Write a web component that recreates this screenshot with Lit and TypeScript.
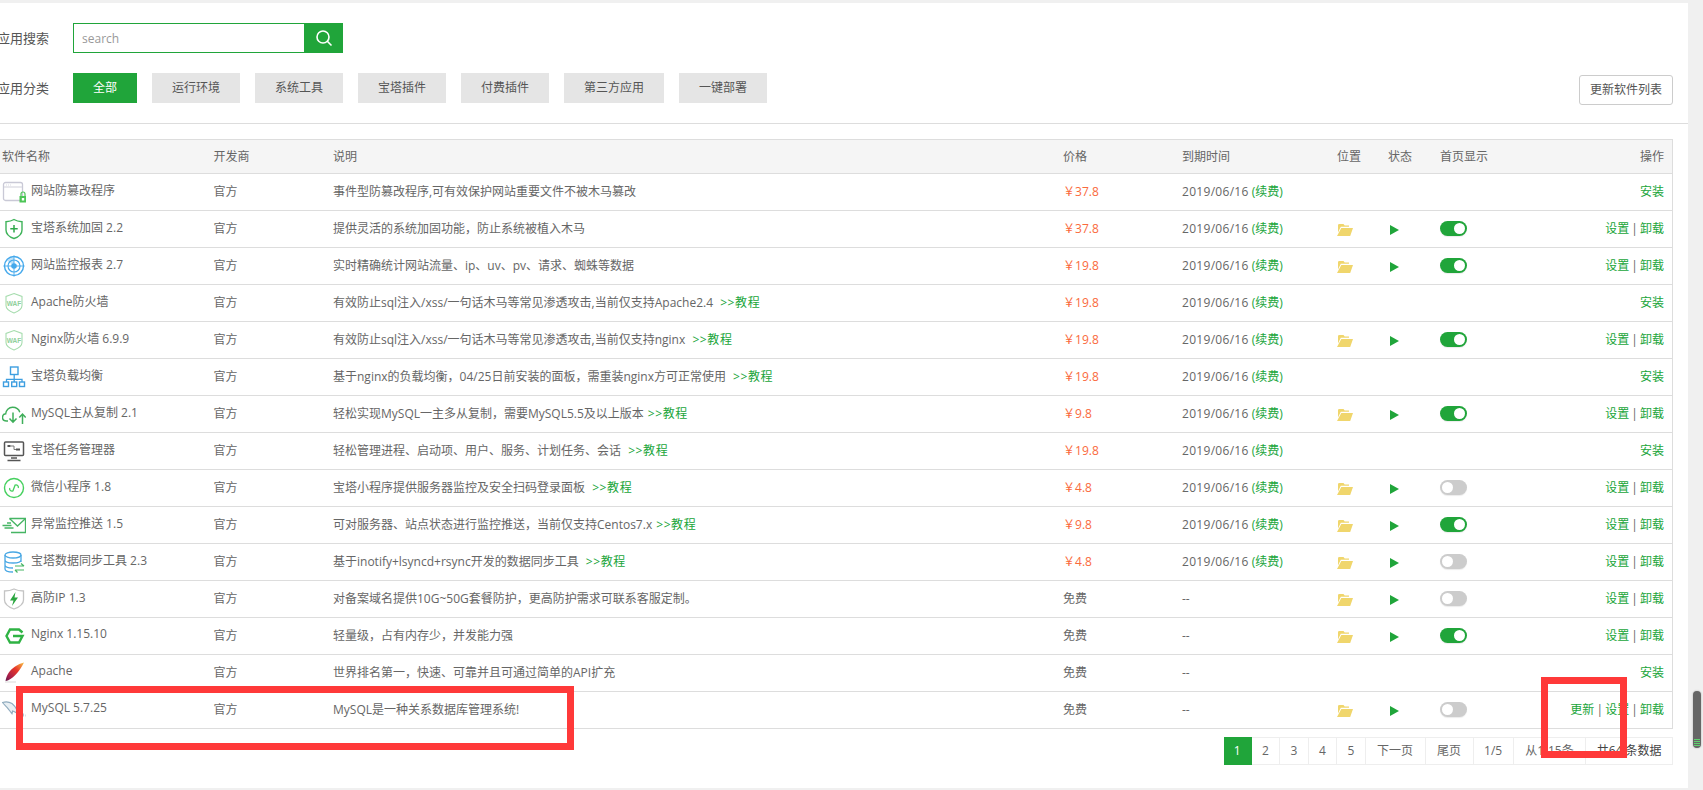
import { LitElement, html, css, svg } from "lit";
import { customElement } from "lit/decorators.js";

const S = (body: unknown) => html`<svg class="ico" viewBox="0 0 24 24" width="24" height="24" fill="none">${body}</svg>`;

const wafIcon = svg`<path d="M12 2.500 20 5.500v9c0 3-4 6-8 7.500-4-1.500-8-4.500-8-7.500v-9z" stroke="#a6dcae" stroke-width="1.100"/><text x="12" y="14.500" text-anchor="middle" font-size="6.500" font-weight="700" font-family="Liberation Sans" fill="#8fcf9b">WAF</text>`;

const icons: Record<string, unknown> = {
  lock: svg`<rect x="1.500" y="2.500" width="19" height="18" rx="2" stroke="#c9c9d6" stroke-width="1.300"/><path d="M2 7h18" stroke="#d8d8e0" stroke-width="1.200"/><path d="M4 5h5" stroke="#dcdce4" stroke-width="1.200" stroke-dasharray="1 1"/><rect x="17.500" y="16" width="7" height="6.500" fill="#4cc556"/><path d="M19 16v-2a2 2 0 0 1 4 0v2" stroke="#4cc556" stroke-width="1.200"/><rect x="19.800" y="18" width="2.400" height="2.500" fill="#fff"/>`,
  shield: svg`<path d="M14 2.500c2.500 1.500 5 2 8 2.200v8.300c0 4-3.500 7-8 8.500-4.500-1.500-8-4.500-8-8.500V4.700c3-.2 5.500-.7 8-2.200z" transform="translate(-2 0)" stroke="#3fb35a" stroke-width="1.400"/><path d="M12 8v7.500M8.300 11.800h7.400" stroke="#2fa84a" stroke-width="1.500"/>`,
  radar: svg`<circle cx="12" cy="12" r="9.500" stroke="#45a9ec" stroke-width="1.400"/><circle cx="12" cy="12" r="6" stroke="#45a9ec" stroke-width="1.200"/><circle cx="12" cy="12" r="2.800" fill="#45a9ec"/><path d="M12 1.500v21M1.500 12h21" stroke="#45a9ec" stroke-width=".9"/><path d="M5 6.500a9.500 9.500 0 0 1 7-3V12z" fill="#45a9ec" opacity=".35"/>`,
  waf: wafIcon,
  net: svg`<rect x="8.500" y="2" width="7.500" height="7.500" stroke="#3d9ee0" stroke-width="1.400"/><path d="M12.200 9.500v5M4.500 17v-2.700h15.500V17M12.200 14v3" stroke="#3d9ee0" stroke-width="1.300"/><rect x="1.500" y="17" width="5" height="4.500" stroke="#3d9ee0" stroke-width="1.400"/><rect x="9.700" y="17" width="5" height="4.500" stroke="#3d9ee0" stroke-width="1.400"/><rect x="17.500" y="17" width="5" height="4.500" stroke="#3d9ee0" stroke-width="1.400"/>`,
  cloud: svg`<path d="M6 19H4.500C2 19 .5 17.200 .5 15.300c0-2 1.500-3.300 3.200-3.500.1-3.700 3.200-6.500 6.800-6.500 3.500 0 6.400 2 7.300 5" stroke="#3fae5a" stroke-width="1.400"/><path d="M11 10.500V20M7.500 16.500l3.500 3.700 3.500-3.700M20.500 22v-10M17.300 15.500l3.200-3.500 3.200 3.500" stroke="#3fae5a" stroke-width="1.500"/>`,
  monitor: svg`<rect x="2.500" y="3" width="19" height="13.500" rx="1" stroke="#555" stroke-width="1.500"/><rect x="5.500" y="6" width="3" height="2" fill="#555"/><rect x="14" y="9.500" width="4" height="2" fill="#555"/><path d="M8.500 7h3.500v3.500h2" stroke="#777" stroke-width="1"/><path d="M9 19h6M5.500 21.500h13" stroke="#555" stroke-width="1.600"/>`,
  mini: svg`<circle cx="12" cy="12" r="9.500" stroke="#45d05e" stroke-width="1.400"/><path d="M8 13.500a2.300 2.300 0 0 0 4 1.500l0-6a2.300 2.300 0 0 1 4 1.500" stroke="#45d05e" stroke-width="1.300" transform="rotate(20 12 12)"/>`,
  mail: svg`<path d="M7.500 5.500h16v14H9" stroke="#46b564" stroke-width="1.300"/><path d="M7.500 5.500l8 7.500 8-7.500" stroke="#46b564" stroke-width="1.300"/><path d="M.5 12.500h9M2.500 15h9M5 10h4" stroke="#46b564" stroke-width="1.300"/>`,
  db: svg`<ellipse cx="11" cy="5" rx="8" ry="3" stroke="#4aa8e4" stroke-width="1.300"/><path d="M3 5v14c0 1.700 3.500 3 8 3M19 5v7M3 10c0 1.700 3.500 3 8 3s8-1.300 8-3M3 15c0 1.700 3.500 3 8 3" stroke="#4aa8e4" stroke-width="1.300"/><path d="M13 16h9M19 13.500l3 2.500M22 20h-9M15.500 22.500l-2.500-2.500" stroke="#46b564" stroke-width="1.200"/>`,
  bolt: svg`<path d="M12 2c3 1.500 6 2 9.500 2v9c0 4-4 7-9.500 9-5.500-2-9.500-5-9.500-9V4c3.500 0 6.500-.5 9.500-2z" stroke="#c4c4c4" stroke-width="1.300"/><path d="M13.500 5 8 13.500h3.500L10 19l6-8.500h-3.500z" fill="#2aa63f"/>`,
  nginx: svg`<path d="M20.500 8.500 17 5.500H8L4.500 12 8 18.500h9l3.500-6.500H11" stroke="#2fb344" stroke-width="2.400"/>`,
  apache: svg`<defs><linearGradient id="fe" x1="1" y1="0" x2="0" y2="1"><stop offset="0" stop-color="#f6c445"/><stop offset=".4" stop-color="#e8372a"/><stop offset=".8" stop-color="#a31d4b"/><stop offset="1" stop-color="#5a1a4a"/></linearGradient></defs><path d="M22 1.500c-6 1.500-12.500 5.500-15.500 10.500C4.800 14.800 4 17.500 3.500 20c1-.2 1.800-.4 2.800-.8C12 17 18.500 9 22 1.500z" fill="url(#fe)"/><path d="M3 21h11" stroke="#e6e6e6" stroke-width="1.500"/>`,
  dolphin: svg`<path d="M.5 4.500c3-1 6.500-.8 9.500 1 2.500 1.800 3.800 4.300 5.200 7 .5 1.200 1 2.300.8 4-1.500-2.300-4-3-5.500-3.500 0 1.500-.5 2.800-.5 2.800-1-1.500-3-4-5-6.500C3.700 7.800 2 6.300.5 4.500z" fill="#e8eff3" stroke="#8fabbe" stroke-width="1.100"/><path d="M21.500 15.500v3M24 16.500v2" stroke="#b5c6d2" stroke-width="1"/>`,
};

type Row = { ic: string; name: string; desc: string; tail?: string; price: string; on?: boolean; off?: boolean; update?: boolean };

const rows: Row[] = [
  { ic: "lock", name: "网站防篡改程序", desc: "事件型防篡改程序,可有效保护网站重要文件不被木马篡改", price: "37.8" },
  { ic: "shield", name: "宝塔系统加固 2.2", desc: "提供灵活的系统加固功能，防止系统被植入木马", price: "37.8", on: true },
  { ic: "radar", name: "网站监控报表 2.7", desc: "实时精确统计网站流量、ip、uv、pv、请求、蜘蛛等数据", price: "19.8", on: true },
  { ic: "waf", name: "Apache防火墙", desc: "有效防止sql注入/xss/一句话木马等常见渗透攻击,当前仅支持Apache2.4 ", tail: ">>教程", price: "19.8" },
  { ic: "waf", name: "Nginx防火墙 6.9.9", desc: "有效防止sql注入/xss/一句话木马等常见渗透攻击,当前仅支持nginx ", tail: ">>教程", price: "19.8", on: true },
  { ic: "net", name: "宝塔负载均衡", desc: "基于nginx的负载均衡，04/25日前安装的面板，需重装nginx方可正常使用 ", tail: ">>教程", price: "19.8" },
  { ic: "cloud", name: "MySQL主从复制 2.1", desc: "轻松实现MySQL一主多从复制，需要MySQL5.5及以上版本", tail: ">>教程", price: "9.8", on: true },
  { ic: "monitor", name: "宝塔任务管理器", desc: "轻松管理进程、启动项、用户、服务、计划任务、会话 ", tail: ">>教程", price: "19.8" },
  { ic: "mini", name: "微信小程序 1.8", desc: "宝塔小程序提供服务器监控及安全扫码登录面板 ", tail: ">>教程", price: "4.8", off: true },
  { ic: "mail", name: "异常监控推送 1.5", desc: "可对服务器、站点状态进行监控推送，当前仅支持Centos7.x", tail: ">>教程", price: "9.8", on: true },
  { ic: "db", name: "宝塔数据同步工具 2.3", desc: "基于inotify+lsyncd+rsync开发的数据同步工具 ", tail: ">>教程", price: "4.8", off: true },
  { ic: "bolt", name: "高防IP 1.3", desc: "对备案域名提供10G~50G套餐防护，更高防护需求可联系客服定制。", price: "", off: true },
  { ic: "nginx", name: "Nginx 1.15.10", desc: "轻量级，占有内存少，并发能力强", price: "", on: true },
  { ic: "apache", name: "Apache", desc: "世界排名第一，快速、可靠并且可通过简单的API扩充", price: "" },
  { ic: "dolphin", name: "MySQL 5.7.25", desc: "MySQL是一种关系数据库管理系统!", price: "", off: true, update: true },
];

const cats = ["全部", "运行环境", "系统工具", "宝塔插件", "付费插件", "第三方应用", "一键部署"];

@customElement("app-root")
export class AppRoot extends LitElement {
  static styles = css`
    :host {
      display: flex;
      width: 1703px;
      height: 790px;
      overflow: hidden;
      position: relative;
      background: #f0f0f0;
      color: #666;
      font-family: "Open Sans", "Noto Sans CJK SC", sans-serif;
      font-size: 12px;
    }
    .panel {
      width: 1688px;
      height: 785px;
      margin-top: 3px;
      background: #fff;
      overflow: hidden;
      flex: none;
    }
    .gutter { flex: 1; padding: 691px 0 0 5px; }
    .thumb {
      width: 8px;
      height: 57px;
      border-radius: 4px;
      background: #666;
      box-shadow: 0 0 2px rgba(0,0,0,.3);
      display: flex;
      flex-direction: column;
      justify-content: flex-end;
      align-items: center;
      gap: 1px;
      padding-bottom: 2px;
      box-sizing: border-box;
    }
    .thumb i { width: 6px; height: 1px; background: #5fd06f; }
    .filters {
      padding: 20px 15px 18px 0;
      border-bottom: 1px solid #ddd;
      display: flex;
      flex-direction: column;
      gap: 20px;
    }
    .line { display: flex; align-items: flex-start; }
    .label {
      width: 76px;
      margin-left: -3px;
      flex: none;
      font-size: 13px;
      line-height: 30px;
      color: #555;
      white-space: nowrap;
    }
    .search { display: flex; height: 30px; width: 270px; }
    .search .input {
      flex: 1;
      border: 1px solid #20a53a;
      border-right: 0;
      padding: 1px 0 0 8px;
      line-height: 28px;
      color: #999;
    }
    .search .go {
      width: 39px;
      background: #20a53a;
      display: flex;
      align-items: center;
      justify-content: center;
    }
    .cats { display: flex; gap: 15px; }
    .cat {
      padding: 0 20px;
      height: 30px;
      line-height: 30px;
      background: #e5e5e5;
      color: #555;
      white-space: nowrap;
    }
    .cat.active { background: #20a53a; color: #fff; }
    .refresh {
      margin: 2px 0 0 auto;
      height: 30px;
      box-sizing: border-box;
      width: 94px;
      text-align: center;
      line-height: 28px;
      border: 1px solid #ccc;
      border-radius: 3px;
      color: #555;
    }
    table {
      table-layout: fixed;
      width: 1679px;
      margin: 15px 0 0 -6px;
      border-collapse: separate;
      border-spacing: 0;
      border-right: 1px solid #ddd;
      box-sizing: border-box;
    }
    th, td {
      padding: 0 8px 2px;
      text-align: left;
      font-weight: 400;
      border-bottom: 1px solid #ddd;
      white-space: nowrap;
      overflow: hidden;
    }
    thead tr { height: 35px; }
    th { background: #f5f5f5; border-top: 1px solid #ddd; color: #666; }
    tbody tr { height: 37px; }
    td.name { padding-bottom: 0; }
    .right { text-align: right; word-spacing: -1px; }
    .namebox { display: flex; align-items: center; gap: 5px; height: 36px; }
    .namebox span { padding-bottom: 5px; }
    .ico { flex: none; display: block; }
    .g { color: #20a53a; }
    .tail { letter-spacing: .6px; padding-left: 4px; }
    .date { letter-spacing: .3px; }
    .price { color: #fa6a3c; }
    .folder, .play { display: block; margin-top: 4px; }
    .tog {
      display: block;
      width: 27px;
      height: 15px;
      border-radius: 8px;
      background: #20a53a;
      position: relative;
      box-shadow: 0 1px 1px rgba(0,0,0,.08);
    }
    .tog.off { background: #ccc; }
    .tog::after {
      content: "";
      position: absolute;
      top: 2px;
      right: 2px;
      width: 11px;
      height: 11px;
      border-radius: 50%;
      background: #fff;
    }
    .tog.off::after { right: auto; left: 2px; }
    .pager { display: flex; justify-content: flex-end; margin: 8px 15px 0 0; }
    .pager > div {
      box-sizing: border-box;
      height: 28px;
      line-height: 26px;
      padding: 0 11.500px;
      border: 1px solid #eee;
      border-left: 0;
      white-space: nowrap;
    }
    .pager .num { padding: 0 10.300px; }
    .pager .cur { background: #20a53a; color: #fff; border-color: #20a53a; width: 28px; padding: 0; text-align: center; }
    .pager .slim { padding: 0 10.500px; }
    .pager .dark { color: #444; }
    .mark { position: absolute; border: 7px solid #ff3939; box-sizing: border-box; pointer-events: none; }
    .mark.a { left: 16px; top: 686px; width: 558px; height: 64px; }
    .mark.b { left: 1541px; top: 677px; width: 86px; height: 81px; }
  `;

  private ops(r: Row) {
    if (!r.on && !r.off) return html`<span class="g">安装</span>`;
    return html`${r.update ? html`<span class="g">更新</span> | ` : ""}<span class="g">设置</span> | <span class="g">卸载</span>`;
  }

  private row(r: Row) {
    const inst = r.on || r.off;
    return html`<tr>
      <td class="name"><div class="namebox">${S(icons[r.ic])}<span>${r.name}</span></div></td>
      <td>官方</td>
      <td>${r.desc}${r.tail ? html`<span class="g tail">${r.tail}</span>` : ""}</td>
      <td>${r.price ? html`<span class="price">￥${r.price}</span>` : "免费"}</td>
      <td>${r.price ? html`<span class="date">2019/06/16</span> <span class="g">(续费)</span>` : "--"}</td>
      <td>${inst ? html`<svg class="folder" width="16" height="12" viewBox="0 0 16 12"><path d="M2.500 0h4l1.200 1.500H12v1.300H3.800L1 8.500V1.300C1 .5 1.700 0 2.500 0zM4.300 4H16l-2.800 8H0z" fill="#f0d66c"/></svg>` : ""}</td>
      <td>${inst ? html`<svg class="play" width="12" height="12" viewBox="0 0 12 12"><path d="M2 1l9 5-9 5z" fill="#20a53a"/></svg>` : ""}</td>
      <td>${inst ? html`<span class="tog ${r.off ? "off" : ""}"></span>` : ""}</td>
      <td class="right">${this.ops(r)}</td>
    </tr>`;
  }

  render() {
    return html`
      <div class="panel">
        <div class="filters">
          <div class="line">
            <div class="label">应用搜索</div>
            <div class="search">
              <div class="input">search</div>
              <div class="go">
                <svg width="18" height="18" viewBox="0 0 18 18" fill="none" stroke="#fff" stroke-width="1.600"><circle cx="8" cy="8" r="6"/><path d="M12.300 12.300 16.500 16.500"/></svg>
              </div>
            </div>
          </div>
          <div class="line">
            <div class="label">应用分类</div>
            <div class="cats">${cats.map((c, i) => html`<div class="cat ${i === 0 ? "active" : ""}">${c}</div>`)}</div>
            <div class="refresh">更新软件列表</div>
          </div>
        </div>
        <table>
          <colgroup>
            <col style="width:211.500px" /><col style="width:119.500px" /><col style="width:730px" /><col style="width:119px" />
            <col style="width:155px" /><col style="width:51px" /><col style="width:52px" /><col style="width:100px" /><col />
          </colgroup>
          <thead>
            <tr>
              <th>软件名称</th><th>开发商</th><th>说明</th><th>价格</th><th>到期时间</th><th>位置</th><th>状态</th><th>首页显示</th><th class="right">操作</th>
            </tr>
          </thead>
          <tbody>${rows.map((r) => this.row(r))}</tbody>
        </table>
        <div class="pager">
          <div class="cur">1</div>
          ${[2, 3, 4, 5].map((n) => html`<div class="num">${n}</div>`)}
          <div>下一页</div>
          <div>尾页</div>
          <div class="slim">1/5</div>
          <div>从1-15条</div>
          <div class="slim dark">共64 条数据</div>
        </div>
      </div>
      <div class="gutter">
        <div class="thumb"><i></i><i></i><i></i><i></i></div>
      </div>
      <div class="mark a"></div>
      <div class="mark b"></div>
    `;
  }
}
